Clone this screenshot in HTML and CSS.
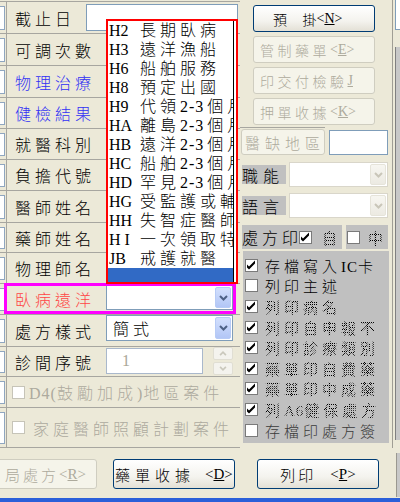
FILE: index.html
```html
<!DOCTYPE html>
<html>
<head>
<meta charset="utf-8">
<link rel="stylesheet" href="styles.css">
</head>
<body>
<svg class="sprite" width="0" height="0" aria-hidden="true">
  <symbol id="ck" viewBox="0 0 11 11"><polygon points="1,4.5 3,6.5 9,0.5 9,3.5 3,9.5 1,7.5"/></symbol>
  <symbol id="chev" viewBox="0 0 9 6"><polyline points="1,1 4.5,4.5 8,1" fill="none" stroke="currentColor" stroke-width="2"/></symbol>
  <symbol id="chup" viewBox="0 0 9 6"><polyline points="1,5 4.5,1.5 8,5" fill="none" stroke="currentColor" stroke-width="2"/></symbol>
</svg>
<div class="screen">
  <div class="main">
    <div class="left">
      <div class="row first h33"><div class="stub"><i></i></div><div class="lab short">截止日</div><div class="date"></div></div>
      <div class="row h32"><div class="stub"><i></i></div><div class="lab">可調次數</div></div>
      <div class="row h32"><div class="stub"><i></i></div><div class="lab blue">物理治療</div></div>
      <div class="row h31"><div class="stub"><i></i></div><div class="lab blue">健檢結果</div></div>
      <div class="row h31"><div class="stub"><i></i></div><div class="lab">就醫科別</div></div>
      <div class="row h31"><div class="stub"><i></i></div><div class="lab">負擔代號</div></div>
      <div class="row h32"><div class="stub"><i></i></div><div class="lab">醫師姓名</div></div>
      <div class="row h30"><div class="stub"><i></i></div><div class="lab">藥師姓名</div></div>
      <div class="row h31"><div class="stub"><i></i></div><div class="lab">物理師名</div></div>
      <div class="row h31 hl">
        <div class="stub"><i></i></div><div class="lab red">臥病遠洋</div>
        <div class="fld"><div class="sel top1"><span class="val"></span><span class="arr"><svg><use href="#chev"/></svg></span></div></div>
        <div class="hlbox"></div>
      </div>
      <div class="row h32"><div class="stub"><i></i></div><div class="lab">處方樣式</div>
        <div class="fld"><div class="sel"><span class="val">簡式</span><span class="arr"><svg><use href="#chev"/></svg></span></div></div>
      </div>
      <div class="row h30"><div class="stub"><i></i></div><div class="lab">診間序號</div>
        <div class="fld"><div class="num">1</div><div class="spin"><b><svg><use href="#chup"/></svg></b><b><svg><use href="#chev"/></svg></b></div></div>
      </div>
      <div class="row h31"><div class="stub"><i></i></div><div class="chkrow"><span class="xpbox"></span><span><span class="lt">D4(</span>鼓勵加成<span class="lt">)</span>地區案件</span></div></div>
      <div class="row h40"><div class="stub"><i></i></div><div class="chkrow wide"><span class="xpbox"></span><span>家庭醫師照顧計劃案件</span></div></div>

      <div class="dd">
        <div class="dd-in">
          <div class="it"><span class="cd">H2</span><span class="ds">長期臥病</span></div>
          <div class="it"><span class="cd">H3</span><span class="ds">遠洋漁船</span></div>
          <div class="it"><span class="cd">H6</span><span class="ds">船舶服務</span></div>
          <div class="it"><span class="cd">H8</span><span class="ds">預定出國</span></div>
          <div class="it"><span class="cd">H9</span><span class="ds">代領<span class="n">2-3</span>個月</span></div>
          <div class="it"><span class="cd">HA</span><span class="ds">離島<span class="n">2-3</span>個月</span></div>
          <div class="it"><span class="cd">HB</span><span class="ds">遠洋<span class="n">2-3</span>個月</span></div>
          <div class="it"><span class="cd">HC</span><span class="ds">船舶<span class="n">2-3</span>個月</span></div>
          <div class="it"><span class="cd">HD</span><span class="ds">罕見<span class="n">2-3</span>個月</span></div>
          <div class="it"><span class="cd">HG</span><span class="ds">受監護或輔助宣告</span></div>
          <div class="it"><span class="cd">HH</span><span class="ds">失智症醫師</span></div>
          <div class="it"><span class="cd">H I</span><span class="ds">一次領取特</span></div>
          <div class="it"><span class="cd">JB</span><span class="ds">戒護就醫</span></div>
          <div class="it on"></div>
        </div>
      </div>
    </div>

    <div class="right">
      <div class="stack">
        <div class="btn on first-btn"><span class="k gapk">預</span><span>掛</span>&lt;<u>N</u>&gt;</div>
        <div class="btn off"><span class="k">管制藥單</span>&lt;<u>E</u>&gt;</div>
        <div class="btn off"><span class="k">印交付檢驗</span><u>J</u></div>
        <div class="btn off"><span class="k">押單收據</span>&lt;<u>K</u>&gt;</div>
      </div>
      <div class="sep"></div>
      <div class="area">
        <div class="btn off abtn">醫缺地區</div>
        <div class="ainp"></div>
      </div>
      <div class="combo">
        <div class="glab">職能</div>
        <div class="dsel"><span class="darr"><svg><use href="#chev"/></svg></span></div>
      </div>
      <div class="combo c2">
        <div class="glab">語言</div>
        <div class="dsel"><span class="darr"><svg><use href="#chev"/></svg></span></div>
      </div>
      <div class="prow">
        <div class="pblock p1"><span class="pl">處方印</span><span class="cbox"><svg><use href="#ck"/></svg></span><span class="dot pz">自</span></div>
        <div class="pblock p2"><span class="cbox"></span><span class="dot pz2">中</span></div>
      </div>
      <div class="panel">
        <div class="pi"><span class="cbox"><svg><use href="#ck"/></svg></span><span class="t">存檔寫入<span class="lt">IC</span>卡</span></div>
        <div class="pi"><span class="cbox"></span><span class="t">列印主述</span></div>
        <div class="pi"><span class="cbox"><svg><use href="#ck"/></svg></span><span class="t dot">列印病名</span></div>
        <div class="pi"><span class="cbox"><svg><use href="#ck"/></svg></span><span class="t dot">列印自申報不</span></div>
        <div class="pi"><span class="cbox"><svg><use href="#ck"/></svg></span><span class="t dot">列印診療類別</span></div>
        <div class="pi"><span class="cbox"><svg><use href="#ck"/></svg></span><span class="t dot">藥單印自費藥</span></div>
        <div class="pi"><span class="cbox"><svg><use href="#ck"/></svg></span><span class="t dot">藥單印中成藥</span></div>
        <div class="pi"><span class="cbox"><svg><use href="#ck"/></svg></span><span class="t dot">列<span class="lt">A6</span>健保處方</span></div>
        <div class="pi"><span class="cbox"></span><span class="t dim">存檔印處方簽</span></div>
      </div>
    </div>

    <div class="edge">
      <div class="edge-in">
        <div class="wb"></div>
        <div class="gb"></div>
      </div>
    </div>
  </div>

  <div class="bottom">
    <div class="btn off bb b1"><span class="k3">局處方</span>&lt;<u>R</u>&gt;</div>
    <div class="btn on bb b2"><span class="k5">藥單收據</span>&lt;<u>D</u>&gt;</div>
    <div class="btn on bb b3"><span class="k3 gp">列印</span>&lt;<u>P</u>&gt;</div>
    <div class="bgray"></div>
  </div>
  <div class="taskbar"></div>
</div>
</body>
</html>
```

FILE: styles.css
```css
* { box-sizing: border-box; }
html, body { margin: 0; padding: 0; }
body {
  width: 400px; height: 502px; overflow: hidden;
  background: #ECE9D8;
  font-family: "Liberation Serif", "Noto Sans CJK TC", serif;
  font-weight: 300;
  color: #000;
}
.sprite { position: absolute; width: 0; height: 0; overflow: hidden; }
.screen { width: 400px; height: 502px; display: flex; flex-direction: column; }
.main { display: flex; height: 448px; flex: none; }

/* ---------- left form ---------- */
.left { position: relative; width: 240px; flex: none; padding-top: 1px; display: flex; flex-direction: column; }
.row { display: flex; flex: none; border-bottom: 1px solid #A7A6A0; }
.row.first { border-top: 1px solid #A7A6A0; }
.h30 { height: 30px; } .h31 { height: 31px; } .h32 { height: 32px; } .h33 { height: 33px; } .h40 { height: 40px; }
.stub { width: 6px; flex: none; padding: 4px 0 3px; }
.stub i { display: block; width: 5px; height: 100%; background: #fff; border: 1px solid #8FA6C0; border-left: none; }
.lab {
  width: 100px; flex: none; border-left: 1px solid #A7A6A0; padding-left: 8px;
  display: flex; align-items: center; font-size: 16px; letter-spacing: 4px; white-space: nowrap;
}
.lab.short { width: 80px; }
.blue { color: #3131F4; }
.red { color: #FF4646; }
.lt { letter-spacing: 1px; }
.date { margin-top: 2px; width: 152px; height: 27px; background: #fff; border: 1px solid #7F9DB9; }
.fld { flex: 1; display: flex; align-items: flex-start; }
.hl { position: relative; }
.hlbox { position: absolute; left: 4px; top: -1px; width: 232px; height: 31px; border: 3px solid #FF00FF; }

.sel {
  width: 127px; height: 26px; background: #fff; border: 1px solid #7F9DB9; padding: 1px;
  display: flex; justify-content: space-between; font-size: 16px; letter-spacing: 4px;
}
.sel.top1 { margin-top: 1px; height: 25px; }
.sel .val { padding-left: 5px; display: flex; align-items: center; }
.arr {
  width: 16px; border: 1px solid #B7CBF6; border-radius: 2px;
  background: linear-gradient(#D3E0FD, #B2C6F6);
  display: flex; align-items: center; justify-content: center; color: #4D6185;
}
svg { display: block; }
.arr svg, .darr svg { width: 9px; height: 6px; }
.num {
  margin-top: 1px; width: 97px; height: 26px; border: 1px solid #A9B8CC; background: #fff;
  color: #ACA899; font-size: 16px; padding-left: 15px; display: flex; align-items: center;
}
.spin { margin-left: 10px; width: 20px; display: flex; flex-direction: column; gap: 2px; }
.spin b {
  height: 13px; background: #F4F3EE; border: 1px solid #E0DED3; border-radius: 2px; color: #CAC8BC;
  display: flex; align-items: center; justify-content: center;
}
.spin svg { width: 8px; height: 5px; }
.chkrow {
  flex: 1; border-left: 1px solid #A7A6A0; padding-left: 5px; display: flex; align-items: center;
  color: #ADAA9E; font-size: 16px; letter-spacing: 4px; white-space: nowrap; overflow: hidden;
}
.xpbox { width: 13px; height: 13px; flex: none; border: 1px solid #C6C4B8; background: #fff; margin-right: 4px; }
.chkrow.wide .xpbox { margin-right: 8px; }

/* dropdown list */
.dd { position: absolute; left: 106px; top: 19px; width: 132px; height: 265px; border: 2px solid #FF0000; background: #fff; }
.dd-in { height: 100%; margin-right: 2px; border-right: 1px solid #000; overflow: hidden; padding-left: 1px; }
.it { height: 19px; line-height: 19px; white-space: nowrap; font-size: 16px; }
.cd { display: inline-block; width: 31px; }
.ds { letter-spacing: 4px; }
.ds .n { letter-spacing: 1px; margin-right: 3px; }
.it.on { background: #316AC5; height: 14px; margin-left: -1px; }

/* ---------- right column ---------- */
.right { width: 150px; flex: none; padding-top: 5px; display: flex; flex-direction: column; }
.stack { margin-left: 13px; width: 122px; display: flex; flex-direction: column; gap: 4px; }
.btn {
  height: 27px; border-radius: 3px; display: flex; align-items: center; font-size: 14px; white-space: nowrap;
  justify-content: flex-start; padding-left: 6px;
}
.btn.on { border: 1px solid #003C74; background: linear-gradient(#FFFFFF, #F4F3EE 60%, #E3E0D5); }
.btn.off { border: 1px solid #CFCDC0; background: #F5F4EA; color: #ADAA9C; }
.first-btn { padding-left: 19px; }
.k { letter-spacing: 3.5px; }
.gapk { margin-right: 12px; }
.sep { margin-top: 2px; width: 85px; height: 1px; background: #A7A6A0; }
.area { margin-top: 1px; display: flex; }
.abtn { width: 84px; height: 26px; margin-left: 1px; font-size: 15px; letter-spacing: 5px; padding-left: 3px; }
.ainp { width: 59px; height: 25px; margin-left: 4px; margin-top: 1px; border: 1px solid #7F9DB9; background: #fff; }
.combo { margin-top: 7px; display: flex; align-items: center; }
.combo.c2 { margin-top: 6px; }
.glab { margin-left: 2px; width: 44px; height: 19px; background: #C0C0C0; font-size: 16px; letter-spacing: 5px; display: flex; align-items: center; overflow: hidden; }
.dsel { margin-left: 3px; width: 99px; height: 25px; background: #fff; border: 1px solid #D9D6CA; padding: 1px; display: flex; justify-content: flex-end; }
.darr {
  width: 16px; border: 1px solid #E6E4DA; border-radius: 2px; background: linear-gradient(#F7F6F1, #ECEAE2);
  display: flex; align-items: center; justify-content: center; color: #C9C6B9;
}
.prow { margin-top: 7px; display: flex; height: 24px; }
.pblock { background: #C0C0C0; display: flex; align-items: center; }
.p1 { margin-left: 2px; width: 100px; }
.p2 { margin-left: 4px; width: 42px; }
.pl { font-size: 16px; letter-spacing: 4px; margin-right: -3px; }
.cbox { width: 13px; height: 13px; flex: none; background: #fff; border: 1px solid #7A7A7A; padding: 0; }
.cbox svg { width: 11px; height: 11px; fill: #000; }
.p2 .cbox { margin-left: 1px; }
.pz { margin-left: 10px; font-size: 15px; }
.pz2 { margin-left: 8px; font-size: 15px; }
.dot {
  color: transparent;
  font-weight: 400;
  background: repeating-conic-gradient(#000 0 25%, transparent 0 50%) 0 0 / 2px 2px;
  -webkit-background-clip: text; background-clip: text;
}
.panel {
  margin-top: 2px; margin-left: 3px; width: 146px; height: 192px; background: #C0C0C0;
  padding-top: 4px; padding-left: 2px; display: flex; flex-direction: column;
}
.pi { height: 20.6px; flex: none; display: flex; align-items: center; font-size: 15px; white-space: nowrap; }
.pi .t { margin-left: 7px; letter-spacing: 4px; }
.pi .dim { color: #3A3A3A; }

/* right edge */
.edge { width: 10px; flex: none; padding-left: 2px; }
.edge-in { height: 100%; border-left: 1px solid #A09E95; padding-left: 2px; display: flex; flex-direction: column; }
.wb { height: 30px; background: #fff; border-left: 1px solid #7F9DB9; border-bottom: 1px solid #7F9DB9; }
.gb { margin-top: 17px; height: 393px; background: #C8C8C8; border-left: 1px solid #808080; }

/* ---------- bottom ---------- */
.bottom { height: 50px; flex: none; display: flex; padding-top: 11px; }
.bb { height: 30px; font-size: 15px; }
.b1 { margin-left: -3px; width: 100px; justify-content: flex-end; padding-right: 10px; }
.b2 { margin-left: 16px; width: 122px; padding-left: 1px; }
.b3 { margin-left: 22px; width: 122px; justify-content: center; padding-left: 0; }
.k3 { letter-spacing: 3px; }
.k5 { letter-spacing: 5px; margin-right: 10px; }
.gp { margin-right: 14px; }
.bgray { margin-left: auto; width: 4px; height: 44px; margin-top: -6px; background: #C8C8C8; border-left: 1px solid #9A9890; }
.taskbar { height: 4px; flex: none; background: #2B5FD9; }
```
